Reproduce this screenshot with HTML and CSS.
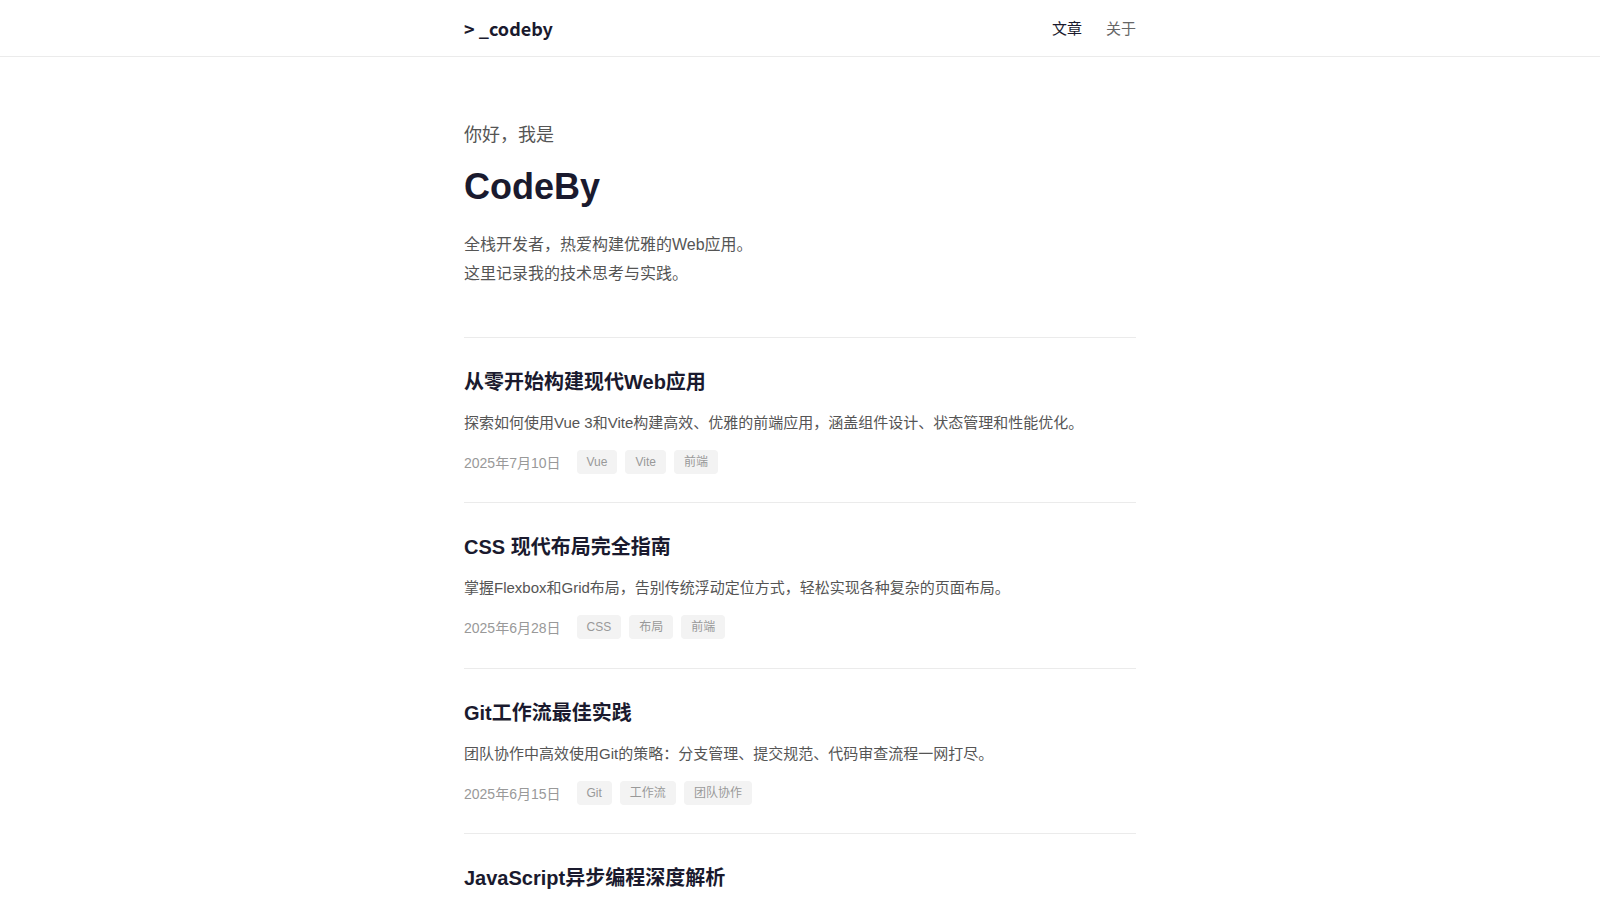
FILE: index.html
```html
<!DOCTYPE html>
<html lang="zh-CN">
<head>
    <meta charset="UTF-8">
    <meta name="viewport" content="width=device-width, initial-scale=1.0">
    <title>codeby</title>
    <link rel="stylesheet" href="styles.css">
</head>
<body>
    <header class="site-header">
        <div class="wrap header-inner">
            <a class="logo" href="#">&gt; _codeby</a>
            <nav class="nav">
                <a href="#" class="active">文章</a>
                <a href="#">关于</a>
            </nav>
        </div>
    </header>

    <main class="wrap">
        <section class="hero">
            <p class="greeting">你好，我是</p>
            <h1 class="name">CodeBy</h1>
            <p class="intro">全栈开发者，热爱构建优雅的Web应用。<br>这里记录我的技术思考与实践。</p>
        </section>

        <div class="post-list">
            <article class="post">
                <h2 class="post-title">从零开始构建现代Web应用</h2>
                <p class="post-excerpt">探索如何使用Vue 3和Vite构建高效、优雅的前端应用，涵盖组件设计、状态管理和性能优化。</p>
                <div class="post-meta">
                    <span class="date">2025年7月10日</span>
                    <div class="tags">
                        <span class="tag">Vue</span>
                        <span class="tag">Vite</span>
                        <span class="tag">前端</span>
                    </div>
                </div>
            </article>

            <article class="post">
                <h2 class="post-title">CSS 现代布局完全指南</h2>
                <p class="post-excerpt">掌握Flexbox和Grid布局，告别传统浮动定位方式，轻松实现各种复杂的页面布局。</p>
                <div class="post-meta">
                    <span class="date">2025年6月28日</span>
                    <div class="tags">
                        <span class="tag">CSS</span>
                        <span class="tag">布局</span>
                        <span class="tag">前端</span>
                    </div>
                </div>
            </article>

            <article class="post">
                <h2 class="post-title">Git工作流最佳实践</h2>
                <p class="post-excerpt">团队协作中高效使用Git的策略：分支管理、提交规范、代码审查流程一网打尽。</p>
                <div class="post-meta">
                    <span class="date">2025年6月15日</span>
                    <div class="tags">
                        <span class="tag">Git</span>
                        <span class="tag">工作流</span>
                        <span class="tag">团队协作</span>
                    </div>
                </div>
            </article>

            <article class="post">
                <h2 class="post-title">JavaScript异步编程深度解析</h2>
                <p class="post-excerpt">从回调函数到Promise，再到async/await，深入理解JavaScript的异步机制。</p>
                <div class="post-meta">
                    <span class="date">2025年6月1日</span>
                    <div class="tags">
                        <span class="tag">JavaScript</span>
                        <span class="tag">异步</span>
                    </div>
                </div>
            </article>
        </div>
    </main>
</body>
</html>
```

FILE: styles.css
```css
* {
    box-sizing: border-box;
}

body {
    margin: 0;
    font-family: "Liberation Sans", Arial, "Noto Sans CJK SC", sans-serif;
    color: #1a1a2e;
    background: #fff;
}

a {
    text-decoration: none;
    color: inherit;
}

.wrap {
    max-width: 672px;
    margin: 0 auto;
}

/* 顶部导航 */
.site-header {
    border-bottom: 1px solid #ebebeb;
}

.header-inner {
    height: 56px;
    display: flex;
    align-items: center;
    justify-content: space-between;
}

.logo {
    font-family: "Noto Sans CJK SC", sans-serif;
    font-size: 18px;
    font-weight: 700;
    color: #1a1a2e;
}

.nav {
    display: flex;
    gap: 24px;
    margin-top: -2px;
}

.nav a {
    font-family: "Noto Sans CJK SC", sans-serif;
    font-size: 15px;
    color: #666;
}

.nav a.active {
    color: #1a1a2e;
}

/* 首页介绍 */
.hero {
    padding: 64px 0 48px;
}

.greeting {
    margin: 0 0 16px;
    font-size: 18px;
    line-height: 28px;
    color: #555;
}

.name {
    margin: 0 0 22px;
    font-size: 36px;
    line-height: 44px;
    font-weight: 700;
    color: #1a1a2e;
}

.intro {
    margin: 0;
    font-size: 16px;
    line-height: 1.8;
    color: #555;
}

/* 文章列表 */
.post {
    border-top: 1px solid #ebebeb;
    padding: 32px 0 28.5px;
}

.post-title {
    margin: 0 0 16px;
    font-size: 20px;
    line-height: 24px;
    font-weight: 700;
    color: #1a1a2e;
}

.post-excerpt {
    margin: 0 0 14px;
    font-size: 15px;
    line-height: 26px;
    color: #555;
}

.post-meta {
    display: flex;
    align-items: center;
    gap: 16px;
}

.date {
    font-size: 14px;
    color: #999;
}

.tags {
    display: flex;
    gap: 8px;
}

.tag {
    font-size: 12px;
    line-height: 16px;
    padding: 4px 10px;
    border-radius: 4px;
    background: #f3f3f3;
    color: #999;
}
```
